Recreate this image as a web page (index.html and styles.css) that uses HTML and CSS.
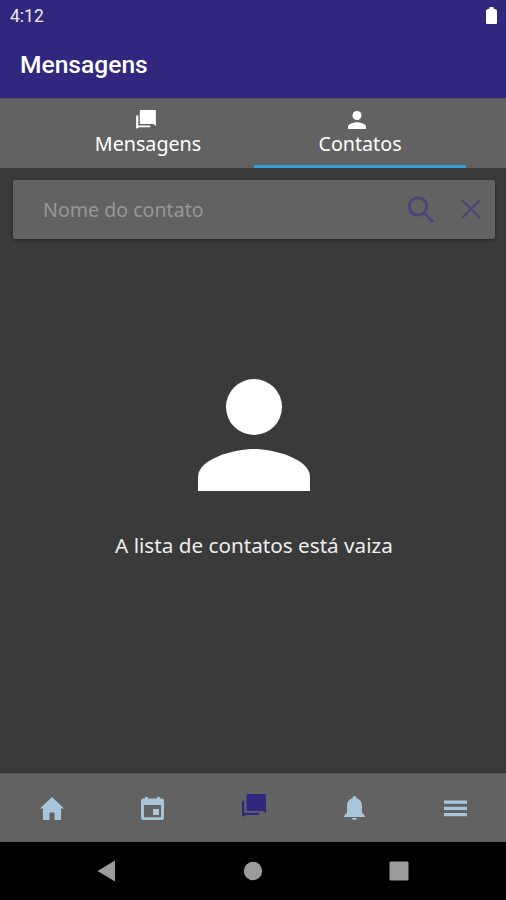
FILE: index.html
```html
<!DOCTYPE html>
<html lang="pt-BR">
<head>
<meta charset="utf-8">
<title>Mensagens</title>
<link rel="stylesheet" href="styles.css">
</head>
<body>
<div class="app">
  <header class="header">
    <div class="status">
      <span class="time">4:12</span>
      <svg class="battery" viewBox="0 0 11 17"><path d="M3.500 0h4v1.500L10 2.500q1 .3 1 1.500v12q0 1-1 1H1q-1 0-1-1V4q0-1.200 1-1.500l2.500-1z"/></svg>
    </div>
    <h1 class="title">Mensagens</h1>
  </header>
  <nav class="tabs">
    <a class="tab">
      <svg class="tab-icon chat" viewBox="0 0 24 23"><path d="M5.500 0h17.500q1 0 1 1v18.500L21 17H5.500q-1 0-1-1V1q0-1 1-1z"/><path d="M1.200 6.500H2.700V18.700H17V21H4L1.200 22.500H0V7.500z"/></svg>
      <span>Mensagens</span>
    </a>
    <a class="tab active">
      <svg class="tab-icon user" viewBox="4 4 16 16"><circle cx="12" cy="8" r="4"/><path d="M12 14c-2.670 0-8 1.340-8 4v2h16v-2c0-2.660-5.330-4-8-4z"/></svg>
      <span>Contatos</span>
    </a>
  </nav>
  <main class="content">
    <div class="search">
      <span class="placeholder">Nome do contato</span>
      <svg class="magnifier" viewBox="0 0 26 27"><circle cx="10" cy="10.500" r="8.700"/><path d="M16 17l9 9"/></svg>
      <svg class="clear" viewBox="0 0 20 20"><path d="M1 1l18 18M19 1L1 19"/></svg>
    </div>
    <div class="empty">
      <svg class="person" viewBox="4 4 16 16"><circle cx="12" cy="8" r="4"/><path d="M12 14c-2.670 0-8 1.340-8 4v2h16v-2c0-2.660-5.330-4-8-4z"/></svg>
      <p class="empty-text">A lista de contatos está vaiza</p>
    </div>
  </main>
  <nav class="bottom">
    <a class="item"><svg class="home" viewBox="0 0 24 23"><path d="M12 0L0 11.500h3V23h6.500v-7.500h5V23H21V11.500h3z"/></svg></a>
    <a class="item"><svg class="calendar" viewBox="0 0 23 23"><path fill-rule="evenodd" d="M4 0h3v1.500h9V0h3v1.500h1.500Q23 1.500 23 4v16.500q0 2.500-2.500 2.500h-18Q0 23 0 20.500V4q0-2.500 2.500-2.500H4zM3 8v12.300h17V8zM12 12h6v6h-6z"/></svg></a>
    <a class="item current"><svg class="chat" viewBox="0 0 24 23"><path d="M5.500 0h17.500q1 0 1 1v18.500L21 17H5.500q-1 0-1-1V1q0-1 1-1z"/><path d="M1.200 6.500H2.200V18.700H17V21H4L1.200 22.500H0V7.500z"/></svg></a>
    <a class="item"><svg class="bell" viewBox="0 0 21 24"><path d="M10.500 0q2 0 2 2.300C16.500 3.300 18 6.500 18 10v6.500l3 3.500v1H0v-1l3-3.500V10c0-3.500 1.500-6.700 5.500-7.700Q8.500 0 10.500 0zM8 22h5q-.3 2-2.500 2T8 22z"/></svg></a>
    <a class="item"><svg class="menu" viewBox="0 0 23 17"><path d="M0 .5h23v3.200H0zM0 6.700h23v3.200H0zM0 13h23v3.200H0z"/></svg></a>
  </nav>
  <div class="system">
    <svg class="key" viewBox="0 0 20 22"><path d="M18 .5v21L.5 11z"/></svg>
    <svg class="key" viewBox="0 0 20 22"><circle cx="10" cy="11" r="9.200"/></svg>
    <svg class="key" viewBox="0 0 20 22"><rect x=".5" y="1.500" width="19" height="19" rx="1.500"/></svg>
  </div>
</div>
</body>
</html>
```
FILE: styles.css
```css
* { box-sizing: border-box; }
body {
  margin: 0;
  background: #3a3a3a;
  font-family: "Noto Sans", sans-serif;
  color: #fff;
}
svg { display: block; fill: currentColor; flex: none; }
.app { width: 506px; height: 900px; display: flex; flex-direction: column; overflow: hidden; }
.header { height: 98px; background: #31277f; font-family: Roboto, sans-serif; }
.status { height: 32px; padding: 0 9px 0 10px; display: flex; align-items: center; justify-content: space-between; }
.time { font-size: 17.500px; color: #eeecfa; }
.battery { width: 11px; height: 17px; margin-top: -1px; }
.title { margin: 0; padding-left: 20px; font-size: 24.600px; line-height: 66px; font-weight: 500; }
.tabs {
  height: 70px;
  padding: 0 40px 0 42px;
  display: flex;
  background: #626262;
  border-top: 1px solid #55545a;
}
.tab {
  flex: 1;
  padding-top: 12px;
  display: flex;
  flex-direction: column;
  align-items: center;
  font-size: 19.700px;
  line-height: 30px;
  border-bottom: 3px solid transparent;
}
.tab.active { border-color: #2f9fd8; }
.tab-icon { width: 18px; height: 18px; }
.tab-icon.chat { width: 20px; height: 19px; margin: -1px 5px 0 0; }
.tab-icon.user { margin-right: 6px; }
.content { flex: 1; padding: 12px 11px 0 13px; }
.search {
  height: 59px;
  padding: 0 14px 0 30px;
  display: flex;
  align-items: center;
  background: #626262;
  border-radius: 2px;
  box-shadow: 0 1px 3px #222;
  color: #4c437a;
}
.placeholder { flex: 1; font-size: 19.600px; color: #979797; }
.magnifier, .clear { fill: none; stroke: currentColor; stroke-width: 2.800; }
.magnifier { width: 26px; height: 27px; margin: -1px 27px 0 0; }
.clear { width: 20px; height: 20px; margin-top: -1px; stroke-width: 2.300; }
.empty { padding-top: 140px; display: flex; flex-direction: column; align-items: center; }
.person { width: 112px; height: 112px; }
.empty-text { margin: 40px 0 0; font-size: 20.700px; line-height: 28px; color: #eee; white-space: nowrap; }
.bottom { height: 69px; padding-left: 1px; display: flex; background: #626262; color: #a9c5d9; border-top: 1px solid #555; }
.item { flex: 1; display: flex; align-items: center; justify-content: center; }
.item.current { color: #31277f; padding-bottom: 5px; }
.home { width: 24px; height: 23px; }
.calendar { width: 23px; height: 23px; }
.bottom .chat { width: 24px; height: 23px; }
.bell { width: 21px; height: 24px; }
.menu { width: 23px; height: 17px; }
.system { height: 58px; padding: 0 97px 0 97px; display: flex; align-items: center; justify-content: space-between; background: #000; color: #9b9b9b; }
.key { width: 20px; height: 22px; }
```
